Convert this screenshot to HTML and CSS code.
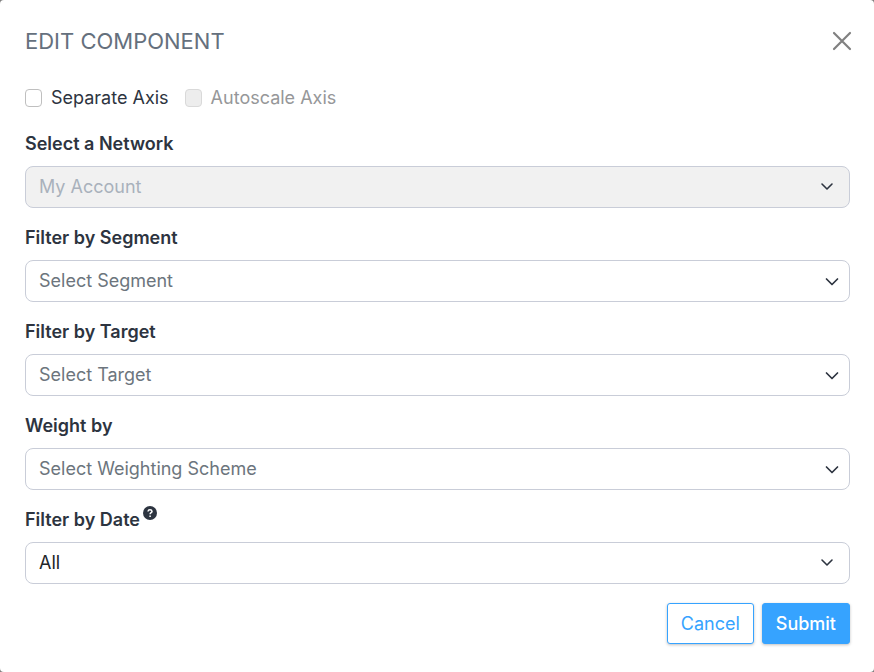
FILE: index.html
```html
<!DOCTYPE html>
<html lang="en">

<head>
    <meta charset="UTF-8">
    <meta name="viewport" content="width=device-width, initial-scale=1.0">
    <title>Edit Component</title>
    <link rel="stylesheet" href="styles.css">
</head>

<body>
    <form class="modal">
        <header class="modal-header">
            <h1 class="modal-title">EDIT COMPONENT</h1>
            <button type="button" class="close" aria-label="Close">
                <svg width="20" height="20" viewBox="0 0 20 20"><path d="M2 2l16 16M18 2L2 18" /></svg>
            </button>
        </header>

        <div class="checks">
            <label class="check"><input type="checkbox"> Separate Axis</label>
            <label class="check disabled"><input type="checkbox" disabled> Autoscale Axis</label>
        </div>

        <div class="field">
            <label for="network">Select a Network</label>
            <div class="select-box native">
                <select id="network" disabled>
                    <option>My Account</option>
                </select>
                <svg class="chevron" width="14" height="14" viewBox="0 0 14 14"><path d="M2 4l5 5 5-5" /></svg>
            </div>
        </div>

        <div class="field">
            <label for="segment">Filter by Segment</label>
            <div class="select-box">
                <select id="segment" class="placeholder">
                    <option>Select Segment</option>
                </select>
                <svg class="chevron" width="14" height="14" viewBox="0 0 14 14"><path d="M1.500 5l5.500 5.500 5.500-5.500" /></svg>
            </div>
        </div>

        <div class="field">
            <label for="target">Filter by Target</label>
            <div class="select-box">
                <select id="target" class="placeholder">
                    <option>Select Target</option>
                </select>
                <svg class="chevron" width="14" height="14" viewBox="0 0 14 14"><path d="M1.500 5l5.500 5.500 5.500-5.500" /></svg>
            </div>
        </div>

        <div class="field">
            <label for="weight">Weight by</label>
            <div class="select-box">
                <select id="weight" class="placeholder">
                    <option>Select Weighting Scheme</option>
                </select>
                <svg class="chevron" width="14" height="14" viewBox="0 0 14 14"><path d="M1.500 5l5.500 5.500 5.500-5.500" /></svg>
            </div>
        </div>

        <div class="field">
            <label for="date">Filter by Date
                <svg class="help" width="14" height="14" viewBox="0 0 14 14">
                    <circle cx="7" cy="7" r="7" />
                    <path d="M5 5.500Q5.200 3.700 7 3.700T9 5.400C9 6.700 7.100 6.600 7.100 8.200M7.100 9.600v1.400" />
                </svg>
            </label>
            <div class="select-box native">
                <select id="date">
                    <option>All</option>
                </select>
                <svg class="chevron" width="14" height="14" viewBox="0 0 14 14"><path d="M2 4l5 5 5-5" /></svg>
            </div>
        </div>

        <footer class="modal-footer">
            <button type="button" class="btn btn-outline">Cancel</button>
            <button type="submit" class="btn btn-primary">Submit</button>
        </footer>
    </form>
</body>

</html>
```
FILE: styles.css
```css
* {
    margin: 0;
    padding: 0;
    box-sizing: border-box;
}

body {
    font-family: Inter, "Liberation Sans", sans-serif;
    font-size: 18px;
    line-height: 24px;
    color: #2d3440;
    background-color: #7f7f7f;
}

.modal {
    min-height: 100vh;
    padding: 25px 24px 25px 25px;
    background-color: #fff;
    border-radius: 4px;
}

/* Header */
.modal-header {
    display: flex;
    justify-content: space-between;
    align-items: center;
    margin-bottom: 29px;
}

.modal-title {
    font-size: 22px;
    line-height: 32px;
    font-weight: 400;
    color: #65707d;
}

.close {
    display: flex;
    margin-right: -2px;
    border: none;
    background: none;
    cursor: pointer;
}

.close path {
    fill: none;
    stroke: #808080;
    stroke-width: 2.2;
    stroke-linecap: round;
}

/* Checkboxes */
.checks {
    display: flex;
    gap: 16px;
    margin-bottom: 22px;
}

.check {
    display: flex;
    align-items: center;
    gap: 9px;
}

.check input {
    appearance: none;
    width: 17px;
    height: 18px;
    border: 1px solid #bfbfbf;
    border-radius: 4px;
    background-color: #fff;
}

.check.disabled {
    color: #969799;
}

.check.disabled input {
    border-color: #d9d9d9;
    background-color: #ededed;
}

/* Fields */
.field {
    margin-bottom: 18px;
}

.field label {
    display: flex;
    gap: 3px;
    margin-bottom: 10px;
    font-weight: 600;
}

.help {
    margin-top: -2px;
    fill: #2d3440;
}

.help path {
    fill: none;
    stroke: #fff;
    stroke-width: 1.5;
}

.select-box {
    display: grid;
    align-items: center;
}

.select-box select,
.select-box .chevron {
    grid-area: 1 / 1;
}

.select-box select {
    appearance: none;
    width: 100%;
    height: 42px;
    padding: 0 40px 0 13px;
    border: 1px solid #c9cdd8;
    border-radius: 8px;
    background-color: #fff;
    font: inherit;
    color: #212529;
}

.select-box select.placeholder {
    color: #6c757d;
}

.select-box select:disabled {
    background-color: #f1f1f1;
    color: #a9b1bc;
    opacity: 1;
}

.chevron {
    justify-self: end;
    margin-right: 11px;
    pointer-events: none;
    fill: none;
    stroke: #2d3440;
    stroke-width: 1.7;
    stroke-linecap: round;
    stroke-linejoin: round;
}

.native .chevron {
    margin-right: 16px;
    stroke-width: 1.6;
}

/* Footer */
.modal-footer {
    display: flex;
    justify-content: flex-end;
    gap: 8px;
    margin-top: 19px;
}

.btn {
    height: 41px;
    padding: 0 13px;
    border: 1px solid #36a3ff;
    border-radius: 3px;
    box-shadow: 0 1px 3px rgba(0, 0, 0, 0.25);
    font: inherit;
    cursor: pointer;
}

.btn-outline {
    background-color: #fff;
    color: #36a3ff;
}

.btn-primary {
    background-color: #36a3ff;
    color: #fff;
    font-weight: 500;
}
```
